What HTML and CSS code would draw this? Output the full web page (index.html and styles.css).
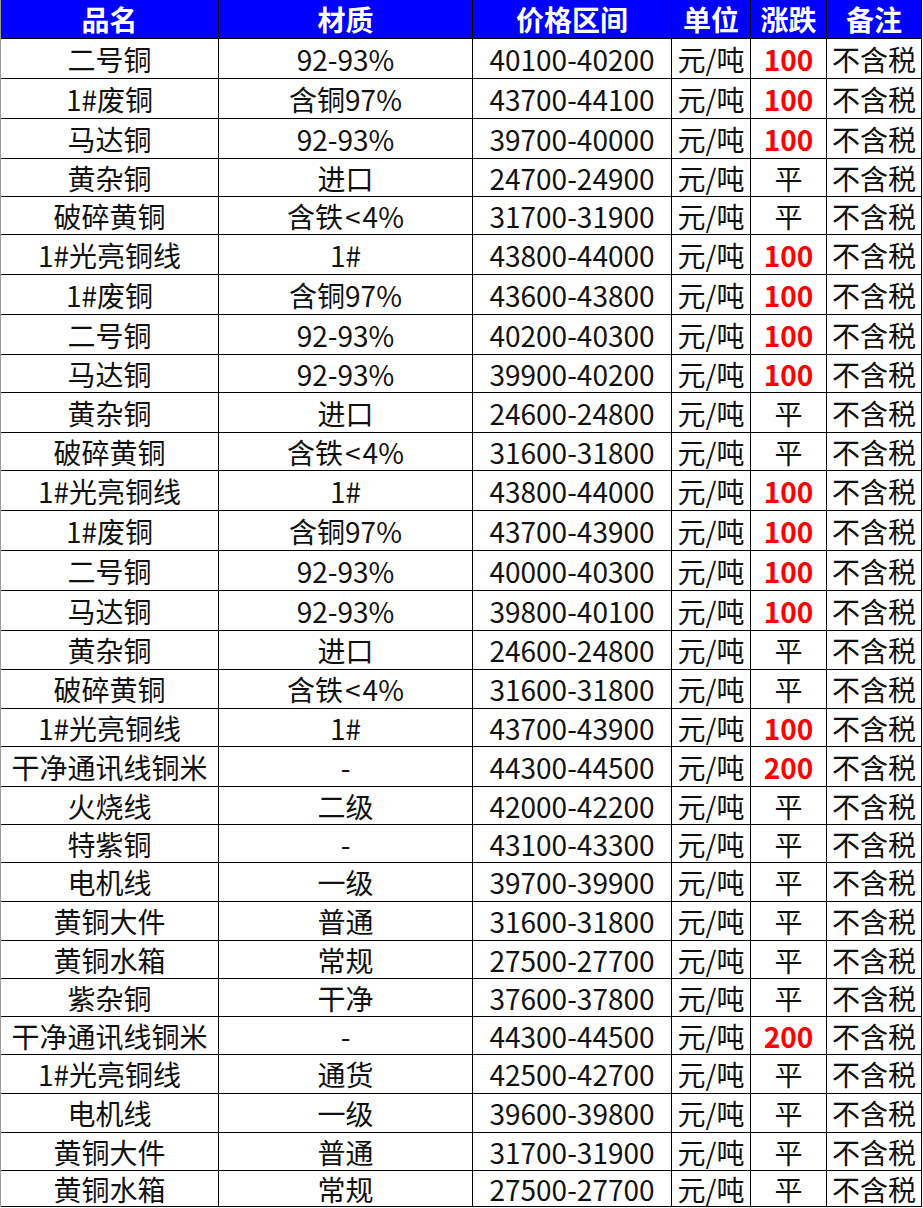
FILE: index.html
```html
<!DOCTYPE html>
<html lang="zh-CN">
<head>
<meta charset="utf-8">
<title>铜价格表</title>
<link rel="stylesheet" href="styles.css">
</head>
<body>
<div class="sheet">
  <div class="row head"><div class="c">品名</div><div class="c">材质</div><div class="c">价格区间</div><div class="c">单位</div><div class="c">涨跌</div><div class="c">备注</div></div>
  <div class="row"><div class="c">二号铜</div><div class="c">92-93%</div><div class="c">40100-40200</div><div class="c">元/吨</div><div class="c up">100</div><div class="c">不含税</div></div>
  <div class="row"><div class="c">1#废铜</div><div class="c">含铜97%</div><div class="c">43700-44100</div><div class="c">元/吨</div><div class="c up">100</div><div class="c">不含税</div></div>
  <div class="row"><div class="c">马达铜</div><div class="c">92-93%</div><div class="c">39700-40000</div><div class="c">元/吨</div><div class="c up">100</div><div class="c">不含税</div></div>
  <div class="row"><div class="c">黄杂铜</div><div class="c">进口</div><div class="c">24700-24900</div><div class="c">元/吨</div><div class="c">平</div><div class="c">不含税</div></div>
  <div class="row"><div class="c">破碎黄铜</div><div class="c">含铁<span class="lt">&lt;</span>4%</div><div class="c">31700-31900</div><div class="c">元/吨</div><div class="c">平</div><div class="c">不含税</div></div>
  <div class="row"><div class="c">1#光亮铜线</div><div class="c">1#</div><div class="c">43800-44000</div><div class="c">元/吨</div><div class="c up">100</div><div class="c">不含税</div></div>
  <div class="row"><div class="c">1#废铜</div><div class="c">含铜97%</div><div class="c">43600-43800</div><div class="c">元/吨</div><div class="c up">100</div><div class="c">不含税</div></div>
  <div class="row"><div class="c">二号铜</div><div class="c">92-93%</div><div class="c">40200-40300</div><div class="c">元/吨</div><div class="c up">100</div><div class="c">不含税</div></div>
  <div class="row"><div class="c">马达铜</div><div class="c">92-93%</div><div class="c">39900-40200</div><div class="c">元/吨</div><div class="c up">100</div><div class="c">不含税</div></div>
  <div class="row"><div class="c">黄杂铜</div><div class="c">进口</div><div class="c">24600-24800</div><div class="c">元/吨</div><div class="c">平</div><div class="c">不含税</div></div>
  <div class="row"><div class="c">破碎黄铜</div><div class="c">含铁<span class="lt">&lt;</span>4%</div><div class="c">31600-31800</div><div class="c">元/吨</div><div class="c">平</div><div class="c">不含税</div></div>
  <div class="row"><div class="c">1#光亮铜线</div><div class="c">1#</div><div class="c">43800-44000</div><div class="c">元/吨</div><div class="c up">100</div><div class="c">不含税</div></div>
  <div class="row"><div class="c">1#废铜</div><div class="c">含铜97%</div><div class="c">43700-43900</div><div class="c">元/吨</div><div class="c up">100</div><div class="c">不含税</div></div>
  <div class="row"><div class="c">二号铜</div><div class="c">92-93%</div><div class="c">40000-40300</div><div class="c">元/吨</div><div class="c up">100</div><div class="c">不含税</div></div>
  <div class="row"><div class="c">马达铜</div><div class="c">92-93%</div><div class="c">39800-40100</div><div class="c">元/吨</div><div class="c up">100</div><div class="c">不含税</div></div>
  <div class="row"><div class="c">黄杂铜</div><div class="c">进口</div><div class="c">24600-24800</div><div class="c">元/吨</div><div class="c">平</div><div class="c">不含税</div></div>
  <div class="row"><div class="c">破碎黄铜</div><div class="c">含铁<span class="lt">&lt;</span>4%</div><div class="c">31600-31800</div><div class="c">元/吨</div><div class="c">平</div><div class="c">不含税</div></div>
  <div class="row"><div class="c">1#光亮铜线</div><div class="c">1#</div><div class="c">43700-43900</div><div class="c">元/吨</div><div class="c up">100</div><div class="c">不含税</div></div>
  <div class="row"><div class="c">干净通讯线铜米</div><div class="c">-</div><div class="c">44300-44500</div><div class="c">元/吨</div><div class="c up">200</div><div class="c">不含税</div></div>
  <div class="row"><div class="c">火烧线</div><div class="c">二级</div><div class="c">42000-42200</div><div class="c">元/吨</div><div class="c">平</div><div class="c">不含税</div></div>
  <div class="row"><div class="c">特紫铜</div><div class="c">-</div><div class="c">43100-43300</div><div class="c">元/吨</div><div class="c">平</div><div class="c">不含税</div></div>
  <div class="row"><div class="c">电机线</div><div class="c">一级</div><div class="c">39700-39900</div><div class="c">元/吨</div><div class="c">平</div><div class="c">不含税</div></div>
  <div class="row"><div class="c">黄铜大件</div><div class="c">普通</div><div class="c">31600-31800</div><div class="c">元/吨</div><div class="c">平</div><div class="c">不含税</div></div>
  <div class="row"><div class="c">黄铜水箱</div><div class="c">常规</div><div class="c">27500-27700</div><div class="c">元/吨</div><div class="c">平</div><div class="c">不含税</div></div>
  <div class="row"><div class="c">紫杂铜</div><div class="c">干净</div><div class="c">37600-37800</div><div class="c">元/吨</div><div class="c">平</div><div class="c">不含税</div></div>
  <div class="row"><div class="c">干净通讯线铜米</div><div class="c">-</div><div class="c">44300-44500</div><div class="c">元/吨</div><div class="c up">200</div><div class="c">不含税</div></div>
  <div class="row"><div class="c">1#光亮铜线</div><div class="c">通货</div><div class="c">42500-42700</div><div class="c">元/吨</div><div class="c">平</div><div class="c">不含税</div></div>
  <div class="row"><div class="c">电机线</div><div class="c">一级</div><div class="c">39600-39800</div><div class="c">元/吨</div><div class="c">平</div><div class="c">不含税</div></div>
  <div class="row"><div class="c">黄铜大件</div><div class="c">普通</div><div class="c">31700-31900</div><div class="c">元/吨</div><div class="c">平</div><div class="c">不含税</div></div>
  <div class="row"><div class="c">黄铜水箱</div><div class="c">常规</div><div class="c">27500-27700</div><div class="c">元/吨</div><div class="c">平</div><div class="c">不含税</div></div>
</div>
</body>
</html>
```
FILE: styles.css
```css
html, body {
  margin: 0;
  padding: 0;
  background: #ffffff;
}
.sheet {
  display: grid;
  width: 921px;
  grid-template-columns: 218px 254px 199px 79px 76px 95px;
  grid-template-rows: 39px 40px 40px 40px 38px 38px 40px 40px 40px 38px 40px 38px 40px 40px 40px 40px 39px 39px 38px 40px 38px 38px 39px 39px 38px 38px 38px 39px 39px 38px 36px;
  font-family: "Noto Sans CJK SC", "Noto Sans", sans-serif;
  font-size: 28px;
  color: #111111;
  border-left: 1px solid #9a9a9a;
}
.row {
  display: contents;
}
.c {
  display: flex;
  align-items: center;
  justify-content: center;
  box-sizing: border-box;
  border-right: 1px solid #000;
  border-bottom: 1px solid #000;
  line-height: 1;
  white-space: nowrap;
}
.lt {
  padding: 0 2px;
}
.head .c {
  background: #0000ff;
  color: #ffffff;
  font-weight: bold;
}
.up {
  color: #ff0000;
  font-weight: bold;
}
```
